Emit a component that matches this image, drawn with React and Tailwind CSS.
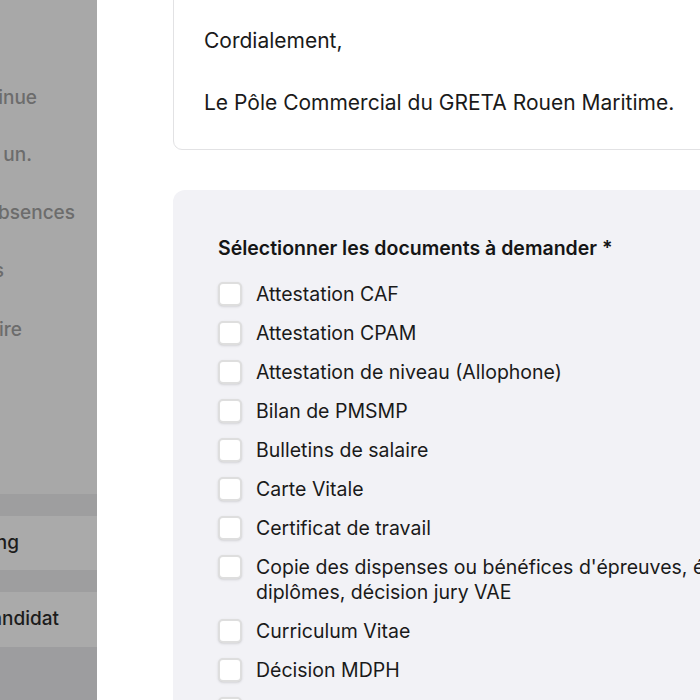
import React from 'react';

const sideLinks = [
  { label: 'Formation continue', pr: 'pr-[60px]', top: 'mt-[86px]' },
  { label: 'Réunion comm. un.', pr: 'pr-[65px]', top: 'mt-[33px]' },
  { label: 'Suivi des absences', pr: 'pr-[22px]', top: 'mt-[34px]' },
  { label: 'Documents', pr: 'pr-[93px]', top: 'mt-[34px]' },
  { label: 'Inventaire', pr: 'pr-[75px]', top: 'mt-[35px]' },
];

const documents = [
  'Attestation CAF',
  'Attestation CPAM',
  'Attestation de niveau (Allophone)',
  'Bilan de PMSMP',
  'Bulletins de salaire',
  'Carte Vitale',
  'Certificat de travail',
  "Copie des dispenses ou bénéfices d'épreuves, équivalences de diplômes, décision jury VAE",
  'Curriculum Vitae',
  'Décision MDPH',
  'Diplômes obtenus',
];

const App = () => {
  return (
    <div className="flex h-[700px] w-[700px] overflow-hidden bg-white font-['Inter',sans-serif]">
      {/* dimmed sidebar */}
      <aside className="flex w-[97px] shrink-0 flex-col overflow-hidden bg-[#a8a8a8]">
        {sideLinks.map((link) => (
          <div key={link.label} className={`flex justify-end whitespace-nowrap ${link.top} ${link.pr}`}>
            <span className="text-[19px] font-medium leading-[24px] text-[#6c6c6c]">{link.label}</span>
          </div>
        ))}
        <div className="mt-[152px] h-[22px] bg-[#9e9e9f]" />
        <div className="flex h-[54px] items-center justify-end whitespace-nowrap bg-[#aaaaaa] pr-[78px]">
          <span className="text-[19px] font-medium text-[#1c1c1c]">Planning</span>
        </div>
        <div className="h-[22px] bg-[#9e9e9f]" />
        <div className="flex h-[55px] items-center justify-end whitespace-nowrap bg-[#aaaaaa] pr-[38px]">
          <span className="text-[19px] font-medium text-[#1c1c1c]">Espace candidat</span>
        </div>
        <div className="flex-1 bg-[#9d9d9f]" />
      </aside>

      <main className="flex flex-col gap-[40px] pl-[76px]">
        <div className="-mt-[20px] w-[760px] shrink-0 rounded-[9px] border border-[#e2e2e4] bg-white px-[30px] pt-[46px] pb-[32px] text-[21px] leading-[28px] text-[#1a1a1a]">
          <p>Cordialement,</p>
          <p className="mt-[34px]">Le Pôle Commercial du GRETA Rouen Maritime.</p>
        </div>

        <div className="w-[760px] shrink-0 rounded-[12px] bg-[#f2f2f6] px-[45px] pt-[45px] pb-[40px]">
          <h3 className="text-[19.5px] font-semibold leading-[26px] text-[#151515]">
            Sélectionner les documents à demander *
          </h3>
          <div className="mt-[21px] flex flex-col gap-[14px]">
            {documents.map((doc) => (
              <label key={doc} className="flex items-start gap-[14px]">
                <span className="h-[24px] w-[24px] shrink-0 rounded-[5px] border-2 border-[#dedede] bg-white shadow-sm" />
                <span className="w-[630px] text-[19.5px] leading-[25px] text-[#1a1a1a]">{doc}</span>
              </label>
            ))}
          </div>
        </div>
      </main>
    </div>
  );
};

export default App;
